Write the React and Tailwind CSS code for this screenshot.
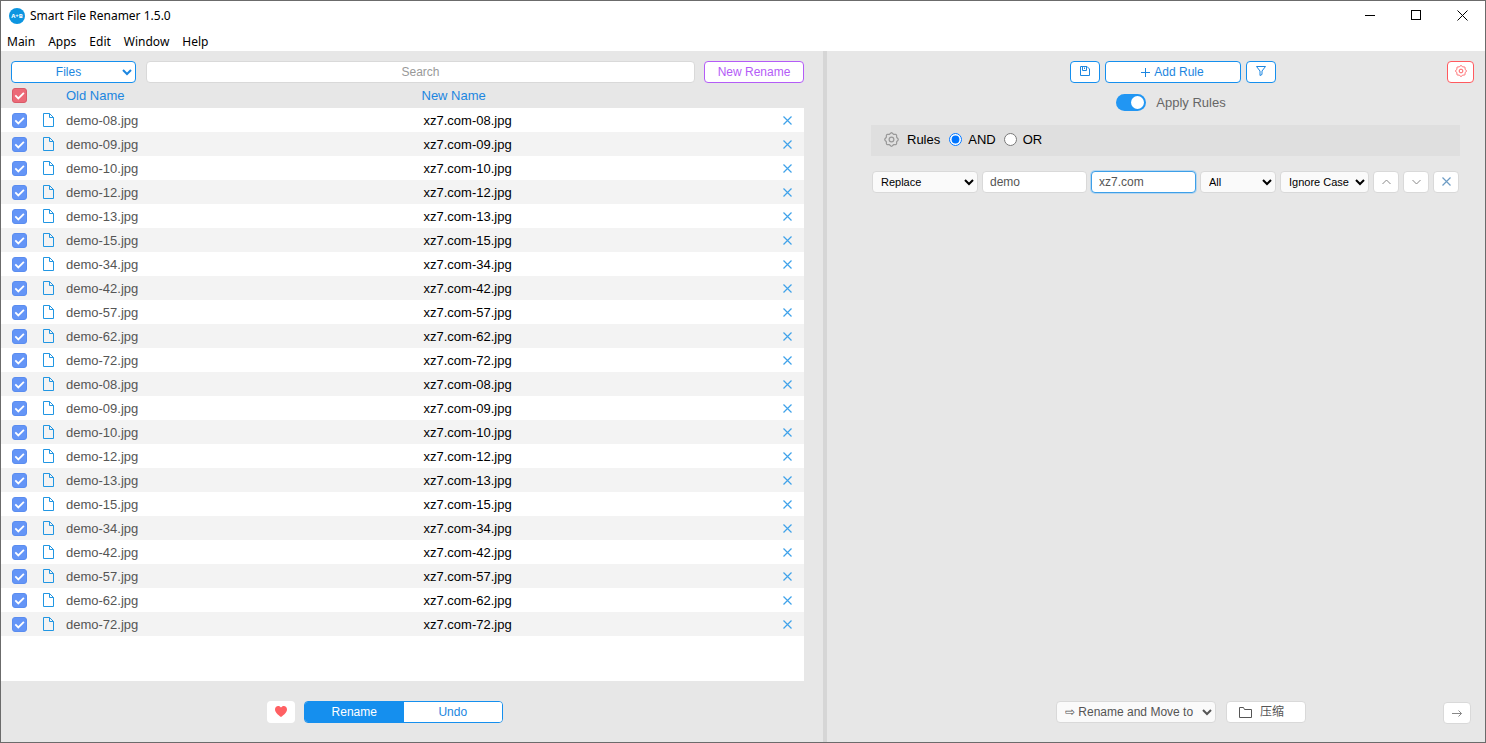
import { clsx } from 'clsx';

const names = ['08', '09', '10', '12', '13', '15', '34', '42', '57', '62', '72'];
const files = [...names, ...names];

const menus = ['Main', 'Apps', 'Edit', 'Window', 'Help'];

function CloseIcon({ className }) {
  return (
    <svg
      viewBox="0 0 9 9"
      className={clsx('size-[9px]', className)}
      fill="none"
      stroke="currentColor"
      strokeWidth="1.2"
    >
      <path d="M.5 .5l8 8M8.500 .5l-8 8" />
    </svg>
  );
}

function FileIcon() {
  return (
    <svg viewBox="0 0 11 14" className="h-3.5 w-[11px] text-[#2196e3]" fill="none" stroke="currentColor">
      <path d="M.5 .5h6l4 4v9h-10z" />
      <path d="M6.500 .5v4h4" />
    </svg>
  );
}

function GearIcon({ className }) {
  const teeth = 8;
  const points = Array.from({ length: 64 }, (_, i) => {
    const a = (i / 64) * Math.PI * 2;
    const r = 6.6 + 0.6 * Math.cos(a * teeth);
    return `${(8 + r * Math.cos(a)).toFixed(2)},${(8 + r * Math.sin(a)).toFixed(2)}`;
  });
  return (
    <svg viewBox="0 0 16 16" className={className} fill="none" stroke="currentColor" strokeWidth="1.3">
      <polygon points={points.join(' ')} />
      <circle cx="8" cy="8" r="2.5" />
    </svg>
  );
}

function Check({ label, color }) {
  return (
    <label className="relative block size-[15px]">
      <input
        type="checkbox"
        defaultChecked
        aria-label={label}
        className={clsx('block size-[15px] appearance-none rounded-[3px] border', color)}
      />
      <svg
        viewBox="0 0 15 15"
        className="pointer-events-none absolute inset-0 text-white"
        fill="none"
        stroke="currentColor"
        strokeWidth="1.8"
      >
        <path d="M3.300 7.400l3 3 5.600-5.600" />
      </svg>
    </label>
  );
}

function TitleBar() {
  return (
    <header className="bg-white font-['Noto_Sans','Noto_Sans_CJK_SC',sans-serif] text-xs text-black">
      <div className="flex h-[30px] items-center justify-between pl-2">
        <div className="flex items-center gap-[5px]">
          <svg viewBox="0 0 16 16" className="size-4">
            <circle cx="8" cy="8" r="8" fill="#0c95e0" />
            <text x="8" y="10" textAnchor="middle" fontSize="6" fontWeight="bold" fill="#fff">
              A+B
            </text>
          </svg>
          <h1>Smart File Renamer 1.5.0</h1>
        </div>
        <div className="flex self-start">
          <button aria-label="Minimize" className="flex h-7 w-[46px] items-center justify-center">
            <span className="h-px w-2.5 bg-black" />
          </button>
          <button aria-label="Maximize" className="flex h-7 w-[46px] items-center justify-center">
            <span className="size-2.5 border border-black" />
          </button>
          <button aria-label="Close" className="flex h-7 w-[46px] items-center justify-center">
            <svg viewBox="0 0 11 11" className="size-[11px]" stroke="currentColor">
              <path d="M.5 .5l10 10M10.500 .5l-10 10" />
            </svg>
          </button>
        </div>
      </div>
      <nav className="flex h-5 items-center gap-[13px] pt-0.5 pl-1.5">
        {menus.map((m) => (
          <button key={m}>{m}</button>
        ))}
      </nav>
    </header>
  );
}

function FilePanel() {
  return (
    <section className="flex flex-col">
      <div className="flex pt-2.5 pr-[19px] pl-2.5 text-xs">
        <select
          aria-label="Source"
          className="h-[22px] w-[125px] rounded-[4px] border border-[#158fee] bg-white pl-0.5 text-center text-[#1c86e0]"
        >
          <option>Files</option>
        </select>
        <input
          type="text"
          placeholder="Search"
          aria-label="Search"
          className="ml-2.5 h-[22px] min-w-0 flex-1 rounded-[4px] border border-[#d9d9d9] bg-white text-center placeholder:text-[#999]"
        />
        <button className="ml-[9px] h-[22px] w-[100px] rounded-[4px] border border-[#b45cf7] bg-white text-[#b45cf7]">
          New Rename
        </button>
      </div>

      <div className="mr-[19px] flex flex-1 flex-col">
        <table className="w-full table-fixed border-separate border-spacing-0 text-left text-[13px] leading-5">
          <thead className="text-[#1c86e0]">
            <tr className="h-[25px]">
              <th className="w-10 p-0 pl-[11px]">
                <Check label="Select all" color="border-[#d95a68] bg-[#ec6a78]" />
              </th>
              <th className="w-6 p-0" />
              <th className="p-0 pl-px font-normal">Old Name</th>
              <th className="p-0 pl-px font-normal">New Name</th>
              <th className="w-7 p-0" />
            </tr>
          </thead>
          <tbody>
            {files.map((n, i) => (
              <tr key={i} className="h-6 bg-white even:bg-[#f3f3f3]">
                <td className="p-0 pl-[11px]">
                  <Check label={`Select demo-${n}.jpg`} color="border-[#5a8df0] bg-[#6495f7]" />
                </td>
                <td className="p-0 pl-0.5">
                  <FileIcon />
                </td>
                <td className="p-0 pt-0.5 pl-px text-[#555]">demo-{n}.jpg</td>
                <td className="p-0 pt-0.5 pl-[3px] text-black">xz7.com-{n}.jpg</td>
                <td className="p-0 pl-[7px]">
                  <button aria-label="Remove" className="block">
                    <CloseIcon className="text-[#3fa2ea]" />
                  </button>
                </td>
              </tr>
            ))}
          </tbody>
        </table>
        <div className="flex-1 bg-white" />
      </div>

      <div className="flex h-[61px] justify-center pt-5 pr-[54px] text-xs">
        <button
          aria-label="Favorite"
          className="flex h-[22px] w-7 items-center justify-center rounded-[4px] bg-white pb-px"
        >
          <svg viewBox="0 0 12 11" className="h-[11px] w-3" fill="#ff6063">
            <path d="M6 11C3 8.500 0 6.400 0 3.400 0 1.400 1.400 0 3.200 0 4.400 0 5.400.6 6 1.600 6.600.6 7.600 0 8.800 0 10.600 0 12 1.400 12 3.400 12 6.400 9 8.500 6 11z" />
          </svg>
        </button>
        <div className="ml-[9px] flex h-[22px] w-[199px] overflow-hidden rounded-[4px] border border-[#158fee]">
          <button className="flex-1 bg-[#158fee] text-white">Rename</button>
          <button className="flex-1 bg-white text-[#1c86e0]">Undo</button>
        </div>
      </div>
    </section>
  );
}

const blueButton =
  'flex h-[22px] items-center justify-center rounded-[4px] border border-[#158fee] bg-white text-[#1c86e0]';
const greyButton =
  'flex h-[22px] items-center justify-center rounded-[4px] border border-[#d9d9d9] bg-white';
const ruleSelect = 'h-[22px] rounded-[4px] border border-[#d9d9d9] bg-[#fafafa] pl-1 text-[11px] text-black';

function RulePanel() {
  return (
    <section className="flex flex-col">
      <div className="grid grid-cols-[1fr_auto_1fr] pt-2.5 pr-[11px] pl-11 text-xs">
        <div />
        <div className="flex gap-[5px]">
          <button aria-label="Save rules" className={clsx(blueButton, 'w-[30px] pb-0.5')}>
            <svg viewBox="0 0 10 10" className="size-2.5" fill="none" stroke="currentColor">
              <path d="M.5 .5h6.500l2.500 2.500v6.500h-9zM2.500 .5v4h4v-4M4.500 1.500v1.500" />
            </svg>
          </button>
          <button className={clsx(blueButton, 'w-[136px] gap-1')}>
            <svg viewBox="0 0 9 9" className="size-[9px]" stroke="currentColor">
              <path d="M4.500 0v9M0 4.500h9" />
            </svg>
            Add Rule
          </button>
          <button aria-label="Filter" className={clsx(blueButton, 'w-[30px] pb-0.5')}>
            <svg viewBox="0 0 10 10" className="size-2.5" fill="none" stroke="currentColor">
              <path d="M.5 .5h9l-3.500 4.500v3.500l-2 1v-4.500z" />
            </svg>
          </button>
        </div>
        <button
          aria-label="Settings"
          className="flex h-[22px] w-[27px] items-center justify-center justify-self-end rounded-[4px] border border-[#ff5a5f] bg-white pb-0.5 text-[#ff5a5f]"
        >
          <GearIcon className="size-3" />
        </button>
      </div>

      <div className="flex justify-center pt-2.5 pr-3.5 pl-11">
        <label className="flex items-center gap-2.5 text-[13px] text-[#666]">
          <input
            type="checkbox"
            role="switch"
            defaultChecked
            className="flex h-[17px] w-[30px] appearance-none items-center rounded-full bg-[#ccc] px-0.5 before:size-[13px] before:rounded-full before:bg-white checked:justify-end checked:bg-[#2196f3]"
          />
          Apply Rules
        </label>
      </div>

      <div className="mt-3 mr-[25px] ml-11 flex h-[31px] items-center bg-[#dfdfdf] pb-px pl-[13px] text-[13px] leading-5 text-black">
        <GearIcon className="size-[15px] text-[#999]" />
        <span className="ml-2">Rules</span>
        <label className="ml-[9px] flex items-center gap-1.5">
          <input type="radio" name="mode" defaultChecked className="size-[13px]" />
          AND
        </label>
        <label className="ml-2 flex items-center gap-1.5">
          <input type="radio" name="mode" className="size-[13px]" />
          OR
        </label>
      </div>

      <div className="mt-[15px] mr-[26px] ml-[45px] flex gap-1 text-xs text-[#555]">
        <select aria-label="Action" className={clsx(ruleSelect, 'w-[106px]')}>
          <option>Replace</option>
        </select>
        <input
          aria-label="Find"
          defaultValue="demo"
          className="h-[22px] min-w-0 flex-1 rounded-[4px] border border-[#d9d9d9] bg-white px-[7px]"
        />
        <input
          aria-label="Replace with"
          defaultValue="xz7.com"
          className="h-[22px] min-w-0 flex-1 rounded-[4px] border border-[#3d9fe8] bg-white px-[7px] ring-1 ring-[#b5d5ee]"
        />
        <select aria-label="Occurrence" className={clsx(ruleSelect, 'w-[76px]')}>
          <option>All</option>
        </select>
        <select aria-label="Case" className={clsx(ruleSelect, 'w-[89px]')}>
          <option>Ignore Case</option>
        </select>
        <button aria-label="Move up" className={clsx(greyButton, 'w-[26px] text-[#888]')}>
          <svg viewBox="0 0 9 6" className="h-1.5 w-[9px]" fill="none" stroke="currentColor">
            <path d="M.5 5l4-4 4 4" />
          </svg>
        </button>
        <button aria-label="Move down" className={clsx(greyButton, 'w-[26px] text-[#888]')}>
          <svg viewBox="0 0 9 6" className="h-1.5 w-[9px]" fill="none" stroke="currentColor">
            <path d="M.5 1l4 4 4-4" />
          </svg>
        </button>
        <button aria-label="Delete rule" className={clsx(greyButton, 'w-[26px]')}>
          <CloseIcon className="text-[#6d9cc4]" />
        </button>
      </div>

      <div className="mt-auto grid h-[61px] grid-cols-[1fr_auto_1fr] pt-5 pr-3.5 pl-16 text-xs text-[#555]">
        <div />
        <div className="flex gap-2.5">
          <select
            aria-label="Output action"
            className="h-[22px] w-40 rounded-[4px] border border-[#d9d9d9] bg-[#fafafa] pl-1"
          >
            <option>⇨ Rename and Move to</option>
          </select>
          <button className="flex h-[22px] w-20 items-center gap-2 rounded-[4px] border border-[#d9d9d9] bg-white pl-3 font-['Liberation_Sans','Noto_Sans_CJK_SC',sans-serif]">
            <svg viewBox="0 0 13 11" className="h-[11px] w-[13px]" fill="none" stroke="currentColor">
              <path d="M.5 .5h4l1 2h7v8h-12z" />
            </svg>
            压缩
          </button>
        </div>
        <button aria-label="Next" className={clsx(greyButton, 'mt-px w-7 justify-self-end text-[#888]')}>
          <svg viewBox="0 0 10 7" className="h-[7px] w-2.5" fill="none" stroke="currentColor">
            <path d="M0 3.500h9.500M6.500 .5l3 3-3 3" />
          </svg>
        </button>
      </div>
    </section>
  );
}

export default function App() {
  return (
    <div className="flex min-h-screen flex-col border border-[#6b6b6b] bg-[#e7e7e7] font-['Liberation_Sans',Arial,sans-serif]">
      <TitleBar />
      <main className="grid flex-1 grid-cols-[minmax(0,822fr)_4px_minmax(0,658fr)]">
        <FilePanel />
        <div className="bg-[#d6d6d6]" />
        <RulePanel />
      </main>
    </div>
  );
}
